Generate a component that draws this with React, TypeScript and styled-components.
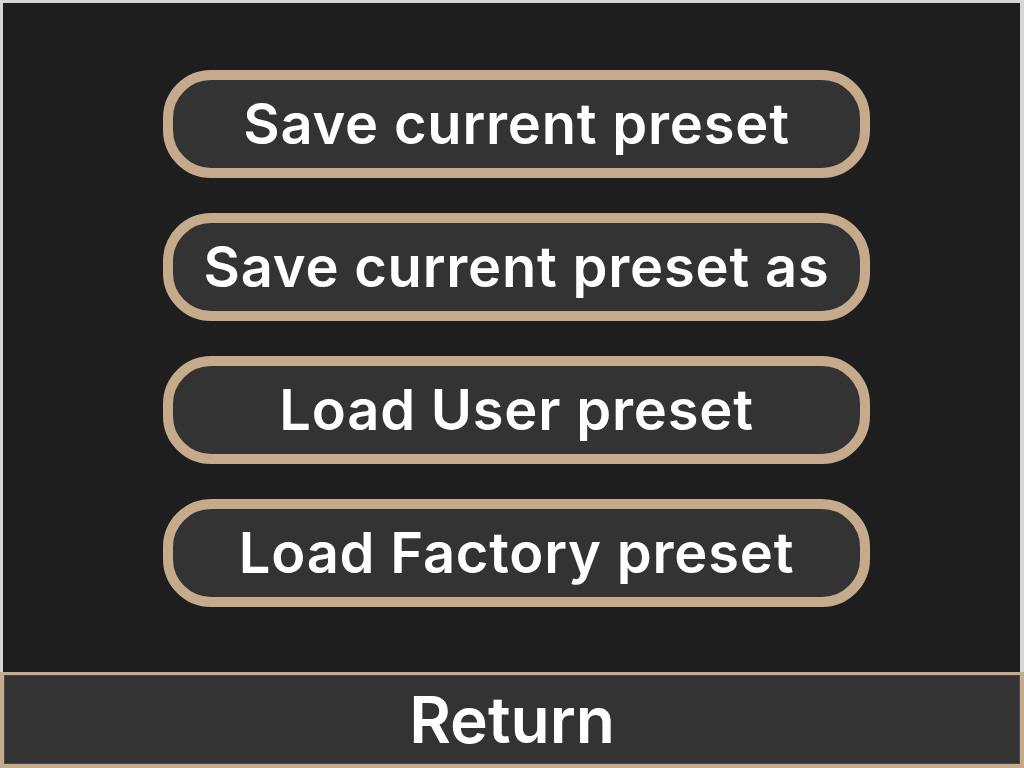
import React from 'react';
import styled, { createGlobalStyle } from 'styled-components';

const GlobalStyle = createGlobalStyle`
  html, body {
    margin: 0;
    padding: 0;
    background: #d6d6d6;
  }
  * {
    box-sizing: border-box;
  }
`;

const Screen = styled.div`
  width: 1024px;
  height: 768px;
  display: flex;
  flex-direction: column;
  background: #d6d6d6;
  font-family: Inter, 'Noto Sans', sans-serif;
`;

const Panel = styled.main`
  flex: 1;
  margin: 3px 4px 0 3px;
  background: #1e1e1e;
  display: flex;
  flex-direction: column;
  gap: 35px;
  padding: 67px 0 0 160px;
`;

const MenuButton = styled.button`
  width: 707px;
  height: 108px;
  border: 10px solid #c6aa8c;
  border-radius: 48px;
  background: #333333;
  color: #ffffff;
  font-family: inherit;
  font-size: 56px;
  font-weight: 600;
  letter-spacing: 0.8px;
  display: flex;
  align-items: center;
  justify-content: center;
  padding: 0;
  cursor: pointer;
`;

const ReturnBar = styled.button`
  height: 96px;
  width: 100%;
  border: 4px solid #c6aa8c;
  border-top-width: 3px;
  background: #333333;
  box-shadow: inset 0 0 0 1px #4a4a4a;
  color: #ffffff;
  font-family: inherit;
  font-size: 64px;
  font-weight: 600;
  display: flex;
  align-items: center;
  justify-content: center;
  padding: 0;
  cursor: pointer;
`;

const items = [
  'Save current preset',
  'Save current preset as',
  'Load User preset',
  'Load Factory preset',
];

export default function App() {
  return (
    <>
      <GlobalStyle />
      <Screen>
        <Panel>
          {items.map((label) => (
            <MenuButton key={label}>{label}</MenuButton>
          ))}
        </Panel>
        <ReturnBar>Return</ReturnBar>
      </Screen>
    </>
  );
}
